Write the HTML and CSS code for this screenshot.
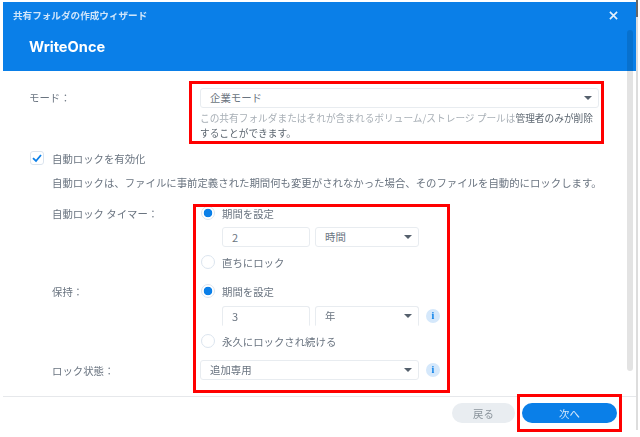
FILE: index.html
```html
<!DOCTYPE html>
<html lang="ja">
<head>
    <meta charset="UTF-8">
    <meta name="viewport" content="width=device-width, initial-scale=1.0">
    <title>共有フォルダの作成ウィザード</title>
    <link rel="stylesheet" href="styles.css">
</head>
<body>
    <div class="dialog">
        <header class="dialog-head">
            <div class="title-row">
                <span class="title">共有フォルダの作成ウィザード</span>
                <svg class="close" viewBox="0 0 10 10" width="9" height="9"><path d="M1 1 9 9M9 1 1 9" stroke="#e4f0fc" stroke-width="1.8" fill="none"/></svg>
            </div>
            <h1>WriteOnce</h1>
        </header>

        <div class="dialog-body">
            <div class="form">
                <div class="mode-row">
                    <label class="mode-label">モード：</label>
                    <div class="mode-field">
                        <div class="select wide">企業モード<span class="arrow"></span></div>
                        <p class="hint">この共有フォルダまたはそれが含まれるボリューム/ストレージ プールは<b>管理者のみが削除することができます。</b></p>
                    </div>
                </div>

                <div class="check-row">
                    <span class="checkbox">
                        <svg viewBox="0 0 14 14" width="14" height="14"><path d="M3 7.2 6 10 11 4" stroke="#0a7fe8" stroke-width="1.8" fill="none"/></svg>
                    </span>
                    自動ロックを有効化
                </div>
                <p class="desc">自動ロックは、ファイルに事前定義された期間何も変更がされなかった場合、そのファイルを自動的にロックします。</p>

                <div class="opt-row first">
                    <label>自動ロック タイマー：</label>
                    <div class="radio-line"><span class="radio on"></span>期間を設定</div>
                </div>
                <div class="input-line near">
                    <div class="input">2</div>
                    <div class="select unit">時間<span class="arrow"></span></div>
                </div>
                <div class="opt-row gap-s">
                    <label></label>
                    <div class="radio-line"><span class="radio"></span>直ちにロック</div>
                </div>

                <div class="opt-row gap-l">
                    <label>保持：</label>
                    <div class="radio-line"><span class="radio on"></span>期間を設定</div>
                </div>
                <div class="input-line open-bottom">
                    <div class="input">3</div>
                    <div class="select unit">年<span class="arrow"></span></div>
                    <span class="info">i</span>
                </div>
                <div class="opt-row gap-s">
                    <label></label>
                    <div class="radio-line"><span class="radio"></span>永久にロックされ続ける</div>
                </div>

                <div class="lock-row">
                    <label>ロック状態：</label>
                    <div class="select lock">追加専用<span class="arrow"></span></div>
                    <span class="info">i</span>
                </div>

                <div class="cut-row">ホールド ロック</div>
            </div>
        </div>

        <footer class="dialog-foot">
            <button class="btn back">戻る</button>
            <button class="btn next">次へ</button>
        </footer>

        <div class="scrollbar"></div>
    </div>

    <div class="page-edge"></div>

    <!-- 赤枠の注釈 -->
    <div class="mark mark-mode"></div>
    <div class="mark mark-lock"></div>
    <div class="mark mark-next"></div>
</body>
</html>
```

FILE: styles.css
```css
html, body {
	height: 100%;
}

body {
	margin: 0;
	background: #fff;
	color: #6a7480;
	font-family: "Noto Sans CJK JP", "Noto Sans", sans-serif;
	font-size: 10.4px;
	overflow: hidden;
}

.dialog {
	position: relative;
	margin: 2px 0 0 3px;
	width: 633px;
	filter: blur(0.35px);
}

.dialog-head {
	background: #0a7fe8;
	color: #fff;
	height: 69px;
	padding: 0 10px;
	box-sizing: border-box;
}

.title-row {
	display: flex;
	justify-content: space-between;
	align-items: center;
	height: 26px;
	padding-right: 8px;
}

.title {
	font-size: 9.6px;
	font-weight: 700;
	color: #cfe5fa;
}

.dialog-head h1 {
	margin: 9px 0 0 16px;
	font-family: Inter, "Noto Sans", sans-serif;
	font-size: 14.6px;
	line-height: 20px;
	font-weight: 700;
}

.dialog-body {
	height: 325px;
	overflow: hidden;
	border-bottom: 1px solid #e6e8eb;
}

.form {
	padding: 17px 0 0 26px;
}

.mode-row {
	display: flex;
}

.mode-label {
	width: 171px;
	line-height: 20px;
}

.select, .input {
	position: relative;
	box-sizing: border-box;
	height: 20px;
	line-height: 18px;
	padding-left: 9px;
	border: 1px solid #e8ecf0;
	border-radius: 3px;
	background: #fff;
}

.select.wide {
	width: 399px;
}

.arrow {
	position: absolute;
	right: 6px;
	top: 7px;
	border-top: 4px solid #55606c;
	border-left: 4px solid transparent;
	border-right: 4px solid transparent;
}

.hint {
	margin: 3px 0 0 0;
	width: 399px;
	color: #a8afb6;
	font-size: 9.7px;
	line-height: 15px;
}

.hint b {
	font-weight: 400;
	color: #5c6670;
}

.check-row {
	display: flex;
	align-items: center;
	gap: 8px;
	margin-top: 10px;
	padding-left: 1px;
	height: 14px;
}

.checkbox {
	box-sizing: border-box;
	width: 14px;
	height: 14px;
	display: flex;
	border: 1px solid #dbe4ee;
	border-radius: 3px;
}

.checkbox svg {
	margin: -1px;
}

.desc {
	margin: 10px 0 0 23px;
	line-height: 15px;
	white-space: nowrap;
}

.opt-row {
	display: flex;
	align-items: center;
	height: 14px;
	margin-left: 23px;
}

.opt-row label {
	width: 149px;
}

.opt-row.first {
	margin-top: 16px;
}

.opt-row.gap-s {
	margin-top: 8px;
}

.opt-row.gap-l {
	margin-top: 15px;
}

.radio-line {
	display: flex;
	align-items: center;
	gap: 7px;
}

.radio {
	box-sizing: border-box;
	width: 14px;
	height: 14px;
	border: 1px solid #dbe4ee;
	border-radius: 50%;
	background: #fff;
}

.radio.on {
	background: radial-gradient(circle, #0a7fe8 0, #0a7fe8 4px, #fff 4.6px);
}

.input-line {
	display: flex;
	align-items: center;
	margin: 8px 0 0 193px;
	height: 20px;
}

.input-line.near {
	margin-top: 7px;
}

.open-bottom .input, .open-bottom .select {
	border-bottom-color: transparent;
	border-radius: 3px 3px 0 0;
}

.input {
	width: 88px;
	font-size: 11px;
}

.select.unit {
	width: 104px;
	margin-left: 5px;
}

.info {
	width: 14px;
	height: 14px;
	margin-left: 7px;
	border-radius: 50%;
	background: #d5e8fb;
	color: #0a7fe8;
	font-family: "Liberation Serif", serif;
	font-size: 10px;
	font-weight: 700;
	line-height: 14px;
	text-align: center;
}

.lock-row {
	display: flex;
	align-items: center;
	margin: 12px 0 0 23px;
	height: 20px;
}

.lock-row label {
	width: 148px;
}

.select.lock {
	width: 219px;
}

.cut-row {
	margin: 14px 0 0 23px;
	line-height: 14px;
	color: #8fb9c4;
}

.scrollbar {
	position: absolute;
	left: 624px;
	top: 28px;
	width: 6px;
	height: 341px;
	border-radius: 3px;
	background: rgba(0, 0, 0, 0.11);
}

.dialog-foot {
	display: flex;
	justify-content: flex-end;
	gap: 7px;
	padding: 6px 19px 0 0;
}

.btn {
	height: 20px;
	padding: 0;
	border: 0;
	border-radius: 10px;
	font: inherit;
}

.btn.back {
	width: 63px;
	background: #e9edf1;
	color: #8b949c;
}

.btn.next {
	width: 95px;
	background: #0a7fe8;
	color: #d5e8fb;
}

.page-edge {
	position: absolute;
	left: 636px;
	top: 0;
	width: 2px;
	height: 430px;
	background: linear-gradient(#666 0, #666 17px, #ddd 17px);
}

.mark {
	position: absolute;
	box-sizing: border-box;
	border: 3px solid #f00;
}

.mark-mode {
	left: 189px;
	top: 81px;
	width: 415px;
	height: 63px;
}

.mark-lock {
	left: 193px;
	top: 204px;
	width: 257px;
	height: 189px;
}

.mark-next {
	left: 517px;
	top: 394px;
	width: 105px;
	height: 38px;
}
```
